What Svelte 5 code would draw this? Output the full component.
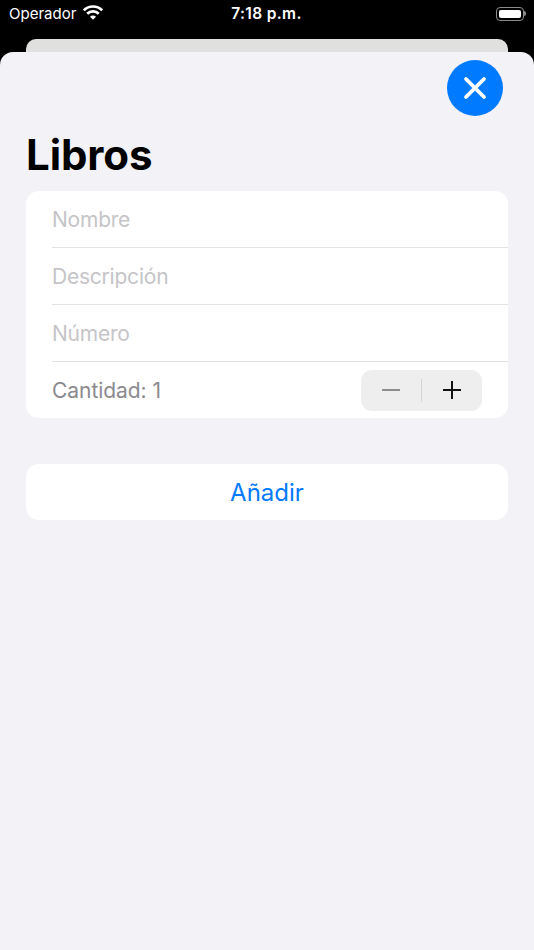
<script>
  let name = $state("");
  let description = $state("");
  let number = $state("");
  let quantity = $state(1);
</script>

<div class="screen">
  <header class="status">
    <div class="status__left">
      <span class="status__carrier">Operador</span>
      <svg class="status__wifi" width="20" height="15" viewBox="0 0 20 15" aria-hidden="true">
        <path d="M0.81 5.31 A13 13 0 0 1 19.19 5.31" fill="none" stroke="#fff" stroke-width="2.7" />
        <path d="M4.2 8.7 A8.2 8.2 0 0 1 15.8 8.7" fill="none" stroke="#fff" stroke-width="2.7" />
        <path d="M10 14.8 L7 11.7 A4.2 4.2 0 0 1 13 11.7 Z" fill="#fff" />
      </svg>
    </div>
    <span class="status__time">7:18 p.m.</span>
    <div class="status__battery" aria-hidden="true"><span></span></div>
  </header>

  <div class="sheet-back"></div>

  <main class="sheet">
    <div class="sheet__top">
      <button type="button" class="close" aria-label="Cerrar">
        <svg width="24" height="24" viewBox="0 0 24 24" aria-hidden="true">
          <path d="M3 3 L21 21 M21 3 L3 21" stroke="#fff" stroke-width="3.8" stroke-linecap="round" />
        </svg>
      </button>
    </div>

    <h1>Libros</h1>

    <section class="card">
      <div class="row"><input placeholder="Nombre" bind:value={name} /></div>
      <div class="row"><input placeholder="Descripción" bind:value={description} /></div>
      <div class="row"><input placeholder="Número" bind:value={number} /></div>
      <div class="row row--stepper">
        <span class="qty">Cantidad: {quantity}</span>
        <div class="stepper">
          <button type="button" aria-label="Menos" disabled={quantity <= 1} onclick={() => quantity--}>
            <svg width="18" height="18" viewBox="0 0 18 18" aria-hidden="true"><path d="M0 9 H18" stroke="#8e8e90" stroke-width="2" /></svg>
          </button>
          <span class="stepper__sep"></span>
          <button type="button" aria-label="Más" onclick={() => quantity++}>
            <svg width="18" height="18" viewBox="0 0 18 18" aria-hidden="true"><path d="M0 9 H18 M9 0 V18" stroke="#111" stroke-width="2" /></svg>
          </button>
        </div>
      </div>
    </section>

    <button type="button" class="add">Añadir</button>
  </main>
</div>

<style>
  :global(body) {
    margin: 0;
    background: #000;
  }

  .screen {
    width: 534px;
    height: 950px;
    display: flex;
    flex-direction: column;
    background: #000;
    font-family: Inter, "Liberation Sans", sans-serif;
    overflow: hidden;
  }

  .status {
    height: 27px;
    padding: 0 10px 0 9px;
    display: grid;
    grid-template-columns: 1fr auto 1fr;
    align-items: center;
    color: #fff;
    font-size: 15px;
  }

  .status__left {
    display: flex;
    align-items: center;
    gap: 7px;
  }

  .status__wifi {
    margin-top: -3px;
  }

  .status__time {
    font-size: 15.5px;
    font-weight: 600;
    letter-spacing: 0.35px;
  }

  .status__battery {
    position: relative;
    justify-self: end;
    width: 28px;
    height: 14px;
    box-sizing: border-box;
    padding: 2px;
    border: 1px solid #8a8a8a;
    border-radius: 4px;
    display: flex;
  }

  .status__battery::after {
    content: "";
    position: absolute;
    right: -3px;
    top: 3px;
    width: 2px;
    height: 5px;
    background: #8a8a8a;
    border-radius: 0 2px 2px 0;
  }

  .status__battery span {
    flex: 1;
    background: #fff;
    border-radius: 2px;
  }

  .sheet-back {
    height: 13px;
    margin: 12px 26px 0;
    background: #e0e0df;
    border-radius: 10px 10px 0 0;
  }

  .sheet {
    flex: 1;
    background: #f2f2f7;
    border-radius: 13px 13px 0 0;
    padding: 8px 26px 0;
    display: flex;
    flex-direction: column;
  }

  .sheet__top {
    display: flex;
    justify-content: flex-end;
    padding-right: 5px;
  }

  .close {
    width: 56px;
    height: 56px;
    border: none;
    border-radius: 50%;
    background: #007aff;
    padding: 0;
    display: flex;
    align-items: center;
    justify-content: center;
  }

  h1 {
    margin: 14px 0 11px;
    font-size: 42px;
    line-height: 50px;
    font-weight: 700;
    letter-spacing: -0.1px;
    color: #000;
  }

  .card {
    background: #fff;
    border-radius: 13px;
    overflow: hidden;
  }

  .row {
    height: 56px;
    margin-left: 26px;
    border-bottom: 1px solid #e3e3e5;
    display: flex;
    align-items: center;
  }

  .row--stepper {
    border-bottom: none;
    justify-content: space-between;
    padding-right: 26px;
  }

  input {
    flex: 1;
    border: none;
    outline: none;
    background: transparent;
    padding: 0;
    font: inherit;
    font-size: 21px;
    letter-spacing: -0.22px;
  }

  input::placeholder {
    color: #c5c5c7;
    opacity: 1;
  }

  .qty {
    font-size: 21px;
    letter-spacing: -0.05px;
    color: #8a8a8e;
  }

  .stepper {
    width: 121px;
    height: 41px;
    background: #eeeeef;
    border-radius: 11px;
    display: flex;
    align-items: center;
  }

  .stepper button {
    flex: 1;
    height: 100%;
    border: none;
    background: transparent;
    padding: 0;
    display: flex;
    align-items: center;
    justify-content: center;
  }

  .stepper__sep {
    width: 1px;
    height: 23px;
    background: #d5d5d7;
  }

  .add {
    margin-top: 46px;
    height: 56px;
    border: none;
    border-radius: 13px;
    background: #fff;
    color: #007aff;
    font: inherit;
    font-size: 24px;
  }
</style>
